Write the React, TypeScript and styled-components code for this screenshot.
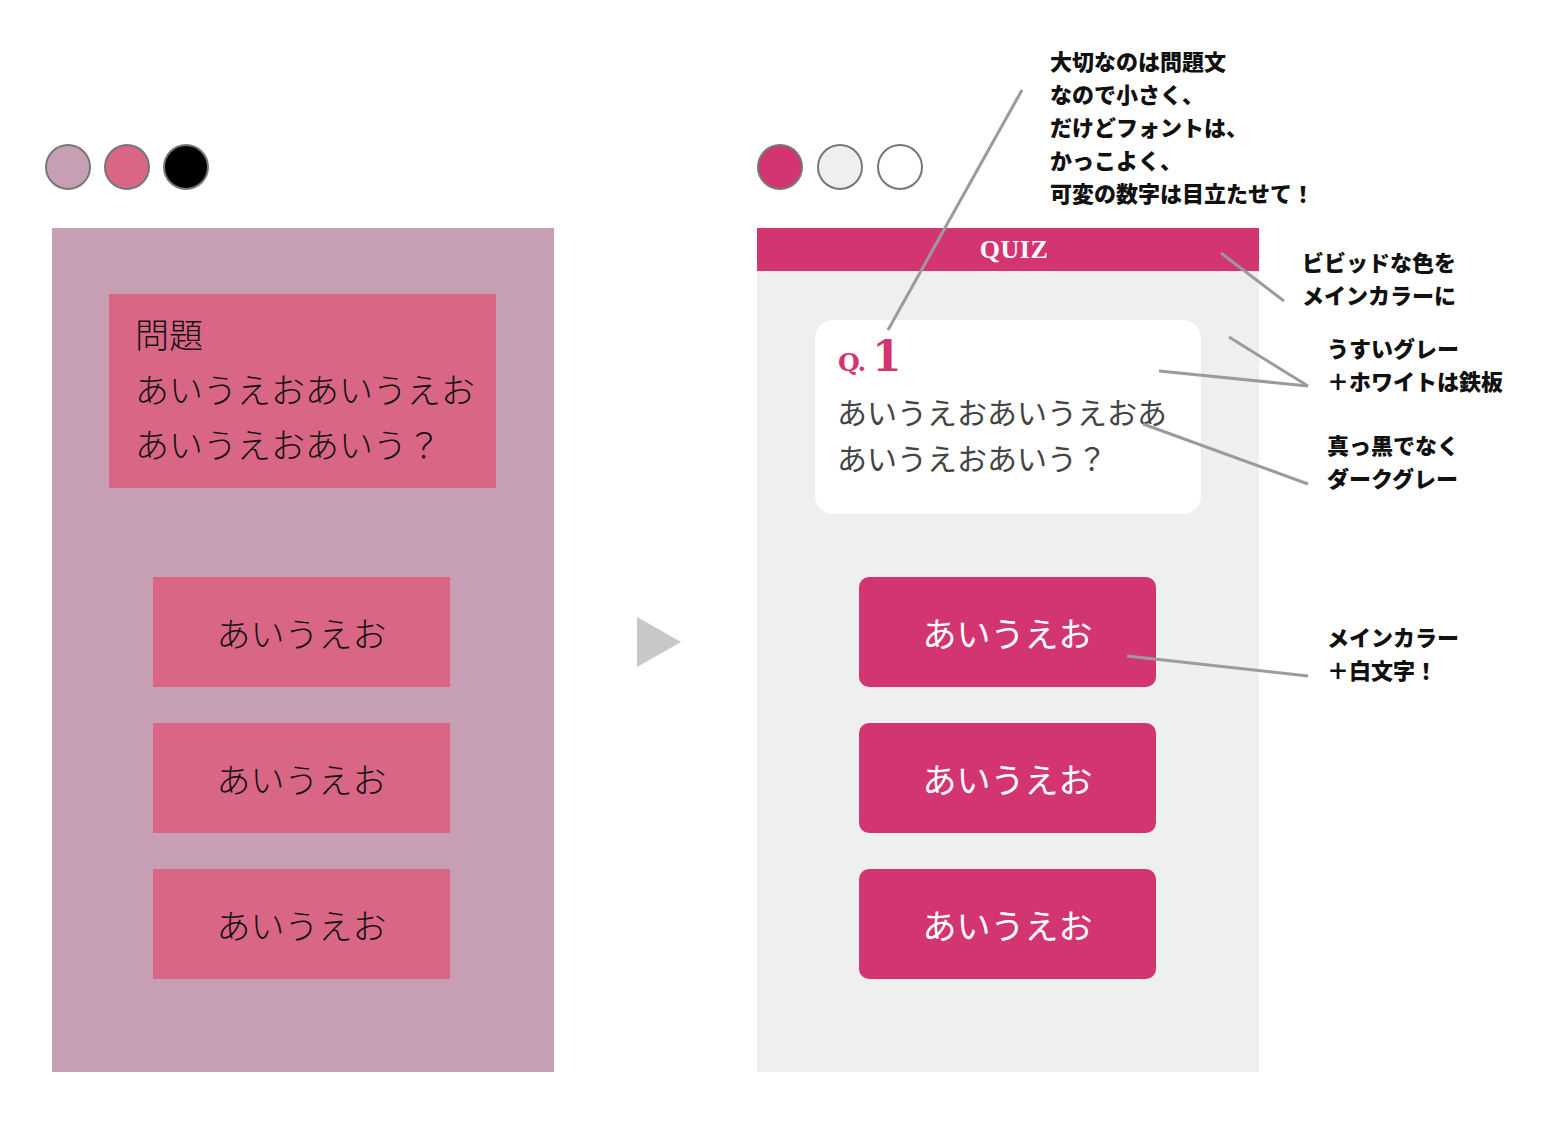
import React from "react";
import styled, { createGlobalStyle } from "styled-components";

const GlobalStyle = createGlobalStyle`
  body {
    margin: 0;
    background: #ffffff;
    font-family: "Noto Sans CJK JP", "Noto Sans", sans-serif;
  }
`;

const MAIN = "#D33572";
const SERIF = `"Liberation Serif", "DejaVu Serif", serif`;

const Stage = styled.div`
  position: relative;
  width: 1544px;
  height: 1122px;
  box-sizing: border-box;
  padding: 144px 0 0 45px;
  display: flex;
  align-items: flex-start;
  overflow: hidden;
`;

const Column = styled.div`
  display: flex;
  flex-direction: column;
  width: 502px;
`;

const Swatches = styled.div<{ $gap: number }>`
  display: flex;
  gap: ${(p) => p.$gap}px;
  height: 46px;
  margin-bottom: 38px;
`;

const Swatch = styled.div<{ $color: string }>`
  width: 46px;
  height: 46px;
  box-sizing: border-box;
  border-radius: 50%;
  border: 2px solid #777;
  background: ${(p) => p.$color};
`;

const Panel = styled.div<{ $bg: string; $shift?: number }>`
  height: 844px;
  width: 502px;
  margin-left: ${(p) => p.$shift || 0}px;
  background: ${(p) => p.$bg};
  display: flex;
  flex-direction: column;
`;

/* before */
const RoughQuestion = styled.div`
  margin: 66px 0 0 57px;
  width: 387px;
  height: 194px;
  box-sizing: border-box;
  padding: 12px 0 0 26px;
  background: #da6686;
  color: #111;
  font-size: 34px;
  font-weight: 300;
  line-height: 55px;
  white-space: nowrap;
`;

const ChoiceList = styled.div<{ $top?: number; $left?: number }>`
  display: flex;
  flex-direction: column;
  gap: 36px;
  margin: ${(p) => p.$top ?? 89}px 0 0 ${(p) => p.$left ?? 101}px;
`;

const RoughChoice = styled.div`
  width: 297px;
  height: 110px;
  background: #da6686;
  color: #111;
  font-size: 34px;
  font-weight: 300;
  display: flex;
  align-items: center;
  justify-content: center;
`;

/* arrow */
const Middle = styled.div`
  width: 210px;
  box-sizing: border-box;
  padding: 473px 0 0 90px;
  display: flex;
`;

const Arrow = styled.div`
  width: 0;
  height: 0;
  border-top: 25px solid transparent;
  border-bottom: 25px solid transparent;
  border-left: 44px solid #c8c8c8;
`;

/* after */
const Header = styled.div`
  height: 43px;
  background: ${MAIN};
  color: #fff;
  font-family: ${SERIF};
  font-weight: 700;
  font-size: 26px;
  letter-spacing: 0.5px;
  display: flex;
  align-items: center;
  justify-content: center;
  padding-left: 12px;
`;

const Card = styled.div`
  margin: 49px 0 0 58px;
  width: 386px;
  height: 194px;
  box-sizing: border-box;
  background: #fff;
  border-radius: 18px;
  padding: 16px 0 0 23px;
`;

const QLabel = styled.div`
  font-family: "DejaVu Serif", "Liberation Serif", serif;
  font-weight: 700;
  color: ${MAIN};
  display: flex;
  align-items: baseline;
  height: 42px;
`;

const QPrefix = styled.span`
  font-size: 25px;
  letter-spacing: -1px;
  margin-right: 7px;
`;

const QNumber = styled.span`
  font-size: 42px;
  line-height: 42px;
`;

const QText = styled.div`
  margin-top: 10px;
  margin-left: -1px;
  color: #444;
  font-size: 30px;
  line-height: 46px;
  white-space: nowrap;
`;

const Choice = styled(RoughChoice)`
  background: ${MAIN};
  color: #fff;
  font-weight: 400;
  border-radius: 10px;
`;

/* notes */
const Note = styled.div<{ $x: number; $y: number }>`
  position: absolute;
  left: ${(p) => p.$x}px;
  top: ${(p) => p.$y}px;
  font-size: 22px;
  line-height: 33px;
  font-weight: 900;
  color: #111;
  white-space: nowrap;
`;

const Leaders = styled.svg`
  position: absolute;
  inset: 0;
  pointer-events: none;
`;

const lines = [
  [1022, 90, 888, 330],
  [1221, 253, 1284, 301],
  [1229, 337, 1308, 386],
  [1159, 371, 1308, 386],
  [1143, 424, 1308, 484],
  [1127, 656, 1308, 676],
];

const notes = [
  { x: 1050, y: 44, text: ["大切なのは問題文", "なので小さく、", "だけどフォントは、", "かっこよく、", "可変の数字は目立たせて！"] },
  { x: 1302, y: 245, text: ["ビビッドな色を", "メインカラーに"] },
  { x: 1327, y: 331, text: ["うすいグレー", "＋ホワイトは鉄板"] },
  { x: 1327, y: 428, text: ["真っ黒でなく", "ダークグレー"] },
  { x: 1327, y: 620, text: ["メインカラー", "＋白文字！"] },
];

const choices = ["あいうえお", "あいうえお", "あいうえお"];

export default function App() {
  return (
    <>
      <GlobalStyle />
      <Stage>
        <Column>
          <Swatches $gap={13}>
            <Swatch $color="#c79fb5" />
            <Swatch $color="#da6686" />
            <Swatch $color="#000" />
          </Swatches>
          <Panel $bg="#c79fb5" $shift={7}>
            <RoughQuestion>
              問題
              <br />
              あいうえおあいうえお
              <br />
              あいうえおあいう？
            </RoughQuestion>
            <ChoiceList>
              {choices.map((c, i) => (
                <RoughChoice key={i}>{c}</RoughChoice>
              ))}
            </ChoiceList>
          </Panel>
        </Column>

        <Middle>
          <Arrow />
        </Middle>

        <Column>
          <Swatches $gap={14}>
            <Swatch $color={MAIN} />
            <Swatch $color="#eef0ef" />
            <Swatch $color="#fff" />
          </Swatches>
          <Panel $bg="#eef0ef">
            <Header>QUIZ</Header>
            <Card>
              <QLabel>
                <QPrefix>Q.</QPrefix>
                <QNumber>1</QNumber>
              </QLabel>
              <QText>
                あいうえおあいうえおあ
                <br />
                あいうえおあいう？
              </QText>
            </Card>
            <ChoiceList $top={63} $left={102}>
              {choices.map((c, i) => (
                <Choice key={i}>{c}</Choice>
              ))}
            </ChoiceList>
          </Panel>
        </Column>

        <Leaders width={1544} height={1122}>
          {lines.map(([x1, y1, x2, y2], i) => (
            <line key={i} x1={x1} y1={y1} x2={x2} y2={y2} stroke="#9b9b9b" strokeWidth={3} />
          ))}
        </Leaders>
        {notes.map((n, i) => (
          <Note key={i} $x={n.x} $y={n.y}>
            {n.text.map((t, j) => (
              <div key={j}>{t}</div>
            ))}
          </Note>
        ))}
      </Stage>
    </>
  );
}
